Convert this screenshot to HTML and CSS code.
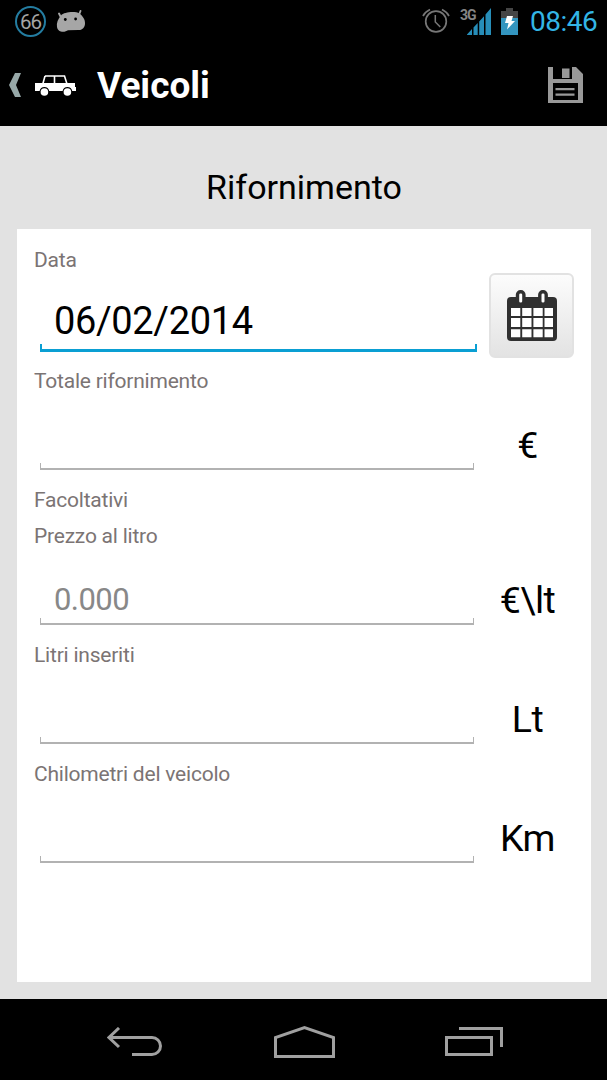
FILE: index.html
```html
<!DOCTYPE html>
<html lang="it">
<head>
<meta charset="utf-8">
<title>Veicoli</title>
<link rel="stylesheet" href="styles.css">
</head>
<body>
<div class="screen">
  <header class="status">
    <span class="badge">66</span>
    <svg class="android" width="30" height="24" viewBox="0 0 30 24"><path d="M3 4.500l2 4M24.500 2l-2 5" stroke="#a6a6a6" stroke-width="1.900" stroke-linecap="round"/><path d="M5 6.500C8 3 19 2 23.500 4.500 26 6.500 29.500 10 29 15c-.3 4-3.500 6.500-7 6l-10 .3C9 23.500 2 24 1 18 .300 14 2 10 5 6.500z" fill="#a6a6a6"/><circle cx="9.300" cy="10.500" r="1.400"/><circle cx="19.600" cy="10" r="1.400"/></svg>
    <div class="indicators">
      <svg class="alarm" width="28" height="26" viewBox="0 0 28 26" fill="none" stroke="#777"><circle cx="14" cy="13.500" r="10.300" stroke-width="1.700"/><path d="M13.300 7v7l5 5" stroke-width="1.500"/><path d="M1 8Q3 4 8 1.500M20 1.500q5 2.500 7 6.500" stroke-width="1.700"/></svg>
      <div class="network"><span class="network-type">3G</span><svg width="24" height="27" viewBox="0 0 24 27" fill="#278eb9"><path d="M0 27v-.5L5 21v6zM6.500 19.500l4.200-4.500v12H6.500zM12.200 13.500l4.800-5.200V27h-4.800zM18.500 6.500L24 0v27h-5.500z"/></svg></div>
      <svg class="battery" width="17" height="27" viewBox="0 0 17 27"><path d="M0 3h5V0h7v3h5v7H0z" fill="#454545"/><path d="M0 10h17v17H0z" fill="#3395bf"/><path d="M6 8h6l-1.500 5H14L6 21.500 7.500 15H4z" fill="#fff"/></svg>
      <time class="clock">08:46</time>
    </div>
  </header>
  <nav class="action">
    <svg class="up" width="12" height="24" viewBox="0 0 12 24"><path d="M6 0h6L7 12l5 12H6L0 12z" fill="#97a8a8"/></svg>
    <svg class="car" width="41" height="21" viewBox="0 0 41 21"><path d="M10 1h19.500l2.500 8M10 1L7.800 9M19.500 1v8" fill="none" stroke="#fff" stroke-width="1.600"/><path d="M0 8h40v4h1v4h-3.800a4.900 4.900 0 0 0-9.600 0H14.200a4.900 4.900 0 0 0-9.600 0H0z" fill="#fff"/><circle cx="9.400" cy="17" r="3.800" fill="#fff"/><circle cx="32.400" cy="17" r="3.800" fill="#fff"/></svg>
    <h1 class="title">Veicoli</h1>
    <svg class="save" width="35" height="36" viewBox="0 0 35 36" fill="#999"><path fill-rule="evenodd" d="M0 0h5v12h19V0h4l7 7v29H0zM5 16v17h25V16z"/><path d="M14 1.500h7.500V11H14zM7.500 21h19v2.300h-19zM7.500 26.500h19v2.300h-19z"/></svg>
  </nav>
  <main class="content">
    <h2 class="heading">Rifornimento</h2>
    <form class="panel">
      <label class="label">Data</label>
      <div class="row first">
        <div class="field active">06/02/2014</div>
        <div class="calendar"><svg width="50" height="51" viewBox="0 0 50 51"><rect y="7" width="50" height="44" rx="4" fill="#303030"/><g fill="#fff"><path d="M4 18h9.300v8H4zM15.200 18h9.300v8h-9.300zM26.400 18h9.300v8h-9.300zM37.500 18H46v8h-8.500zM4 28h9.300v9H4zM15.200 28h9.300v9h-9.300zM26.400 28h9.300v9h-9.300zM37.500 28H46v9h-8.500zM4 39.300h9.300v8H4zM15.200 39.300h9.300v8h-9.300zM26.400 39.300h9.300v8h-9.300zM37.500 39.300H46v8h-8.500z"/></g><g fill="#fff" stroke="#303030" stroke-width="3.400"><rect x="10.500" y="1.700" width="6.400" height="12.500" rx="3"/><rect x="32.800" y="1.700" width="6.400" height="12.500" rx="3"/></g></svg></div>
      </div>
      <label class="label">Totale rifornimento</label>
      <div class="row"><div class="field"></div><div class="unit">€</div></div>
      <label class="label">Facoltativi</label>
      <label class="label l-prezzo">Prezzo al litro</label>
      <div class="row price"><div class="field hint">0.000</div><div class="unit">€\lt</div></div>
      <label class="label">Litri inseriti</label>
      <div class="row"><div class="field"></div><div class="unit">Lt</div></div>
      <label class="label">Chilometri del veicolo</label>
      <div class="row"><div class="field"></div><div class="unit">Km</div></div>
    </form>
  </main>
  <footer class="navigation">
    <svg width="56" height="30" viewBox="0 0 56 30" fill="none" stroke="#a0a0a0" stroke-width="3"><path d="M2 10.500h43a8.500 8.500 0 0 1 0 17H25M12 1L2 10.500 12 20"/></svg>
    <svg width="61" height="33" viewBox="0 0 61 33" fill="none" stroke="#a0a0a0" stroke-width="3"><path d="M1.500 31.500V12.500l29-10 29 10v19z"/></svg>
    <svg width="58" height="29" viewBox="0 0 58 29" fill="none" stroke="#a0a0a0" stroke-width="3"><path d="M1.500 10.500h45v17h-45zM14 1.500h42.500V20"/></svg>
  </footer>
</div>
</body>
</html>
```
FILE: styles.css
```css
* { box-sizing: border-box; }
body { margin: 0; background: #000; font-family: Roboto, "Noto Sans", sans-serif; color: #000; }
svg { display: block; flex: none; }
.screen { width: 607px; height: 1080px; display: flex; flex-direction: column; overflow: hidden; }
.status { height: 42px; display: flex; padding-left: 15px; }
.badge { width: 31px; height: 31px; margin-top: 6px; border: 2px solid #247da1; border-radius: 50%; color: #a4a4a4; font-size: 20.5px; line-height: 28px; text-align: center; letter-spacing: -1px; }
.android { margin: 9px 0 0 10px; }
.indicators { margin-left: auto; display: flex; padding-right: 10px; }
.alarm { margin-top: 8px; }
.network { display: flex; margin: 8px 10px 0 10px; }
.network-type { width: 16px; margin-right: -9px; height: 14px; color: #858585; font-size: 14px; font-weight: 700; line-height: 14px; letter-spacing: -1px; white-space: nowrap; }
.battery { margin-top: 8px; }
.clock { margin-left: 12px; width: 67px; color: #33b5e5; font-size: 28px; line-height: 44px; letter-spacing: -.5px; white-space: nowrap; }
.action { height: 84px; display: flex; align-items: center; padding: 2px 24px 0 9px; }
.car { margin-left: 14px; }
.title { margin: 1px 0 0 21px; color: #fff; font-size: 37px; line-height: 44px; font-weight: 700; }
.save { margin-left: auto; }
.content { height: 873px; background: #e2e2e2; padding: 39px 16px 17px 17px; }
.heading { margin: 0 0 20px; text-align: center; font-size: 34px; line-height: 44px; font-weight: 400; }
.panel { height: 753px; background: #fff; padding: 19px 17px 0; }
.label { display: block; width: max-content; color: #7b7474; font-size: 21px; line-height: 24px; letter-spacing: -.22px; white-space: nowrap; }
.row { height: 95px; padding-left: 6px; display: flex; }
.first { height: 97px; }
.l-prezzo { margin-top: 12px; }
.price { height: 95px; }
.field { position: relative; flex: none; width: 434px; height: 77px; padding: 24px 14px 0; border-bottom: 2px solid #b2b2b2; font-size: 38px; line-height: 50px; letter-spacing: -.35px; }
.field::before, .field::after { content: ""; position: absolute; bottom: 0; height: 5px; width: 1px; background: #b2b2b2; }
.field::before { left: 0; }
.field::after { right: 0; }
.active { width: 437px; height: 80px; border-bottom: 3px solid #0a9fd3; }
.active::before, .active::after { width: 2px; background: #0a9fd3; }
.hint { color: #888; font-size: 31px; padding-top: 27px; letter-spacing: -.55px; }
.unit { flex: none; width: 107px; height: 77px; padding-top: 27px; text-align: center; font-size: 37.5px; line-height: 50px; letter-spacing: -.6px; white-space: nowrap; }
.calendar { width: 85px; height: 85px; margin: 1px 0 0 12px; border: 2px solid #e2e2e2; border-radius: 6px; background: linear-gradient(#fcfcfc, #e3e3e3); display: flex; justify-content: center; align-items: center; }
.navigation { height: 81px; display: flex; justify-content: space-between; align-items: center; padding: 4px 104px 0 107px; }
```
